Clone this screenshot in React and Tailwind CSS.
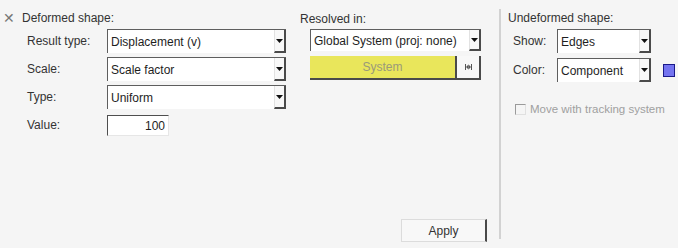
import React from "react";

const font = { fontFamily: '"Liberation Sans", Arial, sans-serif' };

function Arrow() {
  return (
    <div className="flex h-full w-[12px] shrink-0 items-center justify-center border-l border-l-[#e2e2e2] border-r-2 border-b-2 border-r-[#4a4a4a] border-b-[#4a4a4a] bg-[#f8f8f8]">
      <svg width="7" height="4" viewBox="0 0 7 4">
        <path d="M0 0 H7 L3.5 4 Z" fill="#111" />
      </svg>
    </div>
  );
}

function Combo({ text, w, h }) {
  return (
    <div
      className={`flex ${w} ${h} items-stretch border-t border-l border-t-[#5e5e5e] border-l-[#5e5e5e] bg-white`}
    >
      <div className="flex flex-1 items-center pl-[3px] text-[12px] text-[#1e1e1e] whitespace-nowrap overflow-hidden">
        {text}
      </div>
      <Arrow />
    </div>
  );
}

function Row({ label, children, labelW = "w-[80px]" }) {
  return (
    <div className="flex items-center">
      <div className={`${labelW} text-[12px] text-[#333]`}>{label}</div>
      {children}
    </div>
  );
}

export default function App() {
  return (
    <div
      className="flex h-[248px] w-[678px] bg-[#f5f5f5] text-[#333] overflow-hidden"
      style={font}
    >
      {/* Left column */}
      <div className="flex w-[292px] shrink-0 flex-col pt-[11px]">
        <div className="flex h-[14px] items-center">
          <span className="ml-[3px] w-[19px] text-[14px] leading-none text-[#777]">✕</span>
          <span className="text-[12px] text-[#333]">Deformed shape:</span>
        </div>
        <div className="ml-[27px] mt-[4px] flex flex-col gap-[4px]">
          <Row label="Result type:">
            <Combo text="Displacement (v)" w="w-[179px]" h="h-[24px]" />
          </Row>
          <Row label="Scale:">
            <Combo text="Scale factor" w="w-[179px]" h="h-[24px]" />
          </Row>
          <Row label="Type:">
            <Combo text="Uniform" w="w-[179px]" h="h-[24px]" />
          </Row>
          <Row label="Value:">
            <div className="mt-[2px] flex h-[21px] w-[62px] items-center justify-end border-t border-l border-t-[#4e4e4e] border-l-[#4e4e4e] border-b border-r border-b-[#e6e6e6] border-r-[#e6e6e6] bg-white pr-[3px] text-[12px] text-[#1e1e1e]">
              100
            </div>
          </Row>
        </div>
      </div>

      {/* Middle column */}
      <div className="flex w-[207px] shrink-0 flex-col pt-[12px]">
        <div className="ml-[8px] text-[12px] leading-[14px] text-[#333]">Resolved in:</div>
        <div className="ml-[18px] mt-[3px]">
          <Combo text="Global System (proj: none)" w="w-[171px]" h="h-[22px]" />
        </div>
        <div className="ml-[18px] mt-[5px] flex h-[24px] w-[171px]">
          <div className="flex w-[147px] items-center justify-center border-r-2 border-b-2 border-r-[#4a4a4a] border-b-[#4a4a4a] bg-[#e9e65b] text-[12px] text-[#9a9a7a]">
            System
          </div>
          <div className="flex flex-1 items-center justify-center border-r-2 border-b-2 border-r-[#4a4a4a] border-b-[#4a4a4a] bg-[#f8f8f8]">
            <svg width="7" height="6" viewBox="0 0 7 6">
              <rect x="0" y="0" width="1" height="6" fill="#555" />
              <rect x="6" y="0" width="1" height="6" fill="#555" />
              <path d="M1 3 L3.5 0.5 V5.5 Z" fill="#555" />
              <path d="M6 3 L3.5 0.5 V5.5 Z" fill="#555" />
            </svg>
          </div>
        </div>
        <div className="flex-1" />
        <div className="mb-[6px] ml-[109px] flex h-[23px] w-[86px] items-center justify-center border border-[#dcdcdc] border-r-2 border-r-[#4a4a4a] bg-[#f8f8f8] text-[12px] text-[#333]">
          Apply
        </div>
      </div>

      {/* Separator */}
      <div className="my-[9px] w-[2px] shrink-0 bg-[#d2d2d2]" />

      {/* Right column */}
      <div className="flex flex-1 flex-col pt-[11px]">
        <div className="ml-[7px] text-[12px] leading-[14px] text-[#333]">Undeformed shape:</div>
        <div className="ml-[12px] mt-[4px] flex flex-col gap-[5px]">
          <Row label="Show:" labelW="w-[44px]">
            <Combo text="Edges" w="w-[94px]" h="h-[24px]" />
          </Row>
          <Row label="Color:" labelW="w-[44px]">
            <Combo text="Component" w="w-[94px]" h="h-[24px]" />
            <div className="ml-[12px] h-[13px] w-[12px] border border-[#1a1a8a] bg-[#7474f0]" />
          </Row>
        </div>
        <div className="ml-[14px] mt-[19px] flex items-center">
          <div className="h-[11px] w-[11px] border-t border-l border-t-[#9a9a9a] border-l-[#9a9a9a] border-b border-r border-b-[#e0e0e0] border-r-[#e0e0e0] bg-[#f5f5f5]" />
          <span className="ml-[4px] text-[11.5px] text-[#a0a0a0]">Move with tracking system</span>
        </div>
      </div>
    </div>
  );
}
